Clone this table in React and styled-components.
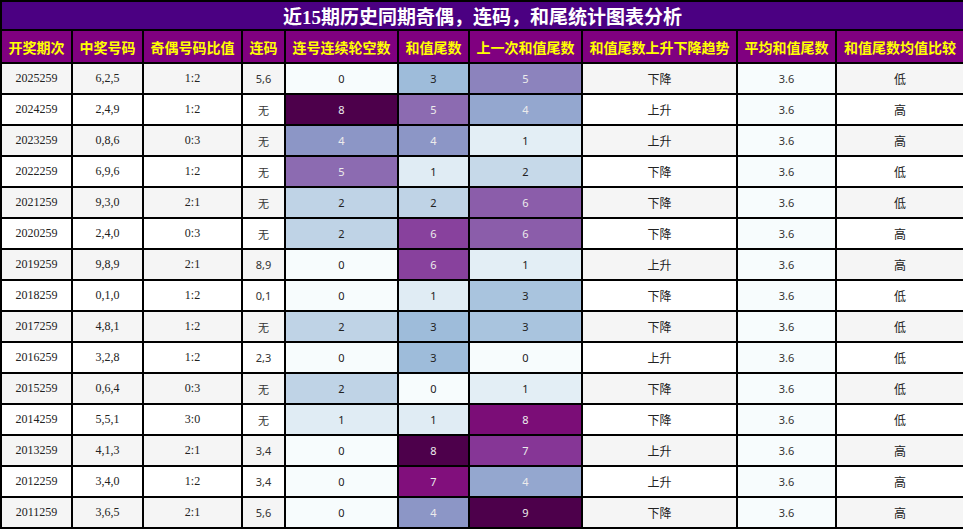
import React from "react"
import styled, { createGlobalStyle } from "styled-components"

const GlobalStyle = createGlobalStyle`
  html, body {
    margin: 0;
    padding: 0;
    background: #ffffff;
  }
`

const headers = [
  "开奖期次",
  "中奖号码",
  "奇偶号码比值",
  "连码",
  "连号连续轮空数",
  "和值尾数",
  "上一次和值尾数",
  "和值尾数上升下降趋势",
  "平均和值尾数",
  "和值尾数均值比较",
]

const widths = [71, 71, 99, 43, 113, 71, 113, 155, 99, 128]

const rows = [
  ["2025259", "6,2,5", "1:2", "5,6", 0, 3, 5, "下降", "低"],
  ["2024259", "2,4,9", "1:2", "无", 8, 5, 4, "上升", "高"],
  ["2023259", "0,8,6", "0:3", "无", 4, 4, 1, "上升", "高"],
  ["2022259", "6,9,6", "1:2", "无", 5, 1, 2, "下降", "低"],
  ["2021259", "9,3,0", "2:1", "无", 2, 2, 6, "下降", "低"],
  ["2020259", "2,4,0", "0:3", "无", 2, 6, 6, "下降", "高"],
  ["2019259", "9,8,9", "2:1", "8,9", 0, 6, 1, "上升", "高"],
  ["2018259", "0,1,0", "1:2", "0,1", 0, 1, 3, "下降", "低"],
  ["2017259", "4,8,1", "1:2", "无", 2, 3, 3, "下降", "低"],
  ["2016259", "3,2,8", "1:2", "2,3", 0, 3, 0, "上升", "低"],
  ["2015259", "0,6,4", "0:3", "无", 2, 0, 1, "下降", "低"],
  ["2014259", "5,5,1", "3:0", "无", 1, 1, 8, "下降", "低"],
  ["2013259", "4,1,3", "2:1", "3,4", 0, 8, 7, "上升", "高"],
  ["2012259", "3,4,0", "1:2", "3,4", 0, 7, 4, "上升", "高"],
  ["2011259", "3,6,5", "2:1", "5,6", 0, 4, 9, "下降", "高"],
]

// BuPu scale
const palette = [
  [247, 252, 253],
  [224, 236, 244],
  [191, 211, 230],
  [158, 188, 218],
  [140, 150, 198],
  [140, 107, 177],
  [136, 65, 157],
  [129, 15, 124],
  [77, 0, 75],
]

const scale = t => {
  const p = Math.max(0, Math.min(1, t)) * (palette.length - 1)
  const i = Math.min(Math.floor(p), palette.length - 2)
  const f = p - i
  const c = palette[i].map((v, k) => Math.round(v + (palette[i + 1][k] - v) * f))
  return `rgb(${c.join(",")})`
}

const heat = (col, value) => {
  const vals = rows.map(r => r[col])
  const min = Math.min(...vals)
  const max = Math.max(...vals)
  const t = max === min ? 0 : (value - min) / (max - min)
  return { bg: scale(t), light: t > 0.4 }
}

const App = () => (
  <>
    <GlobalStyle />
    <Table>
      <colgroup>
        {widths.map((w, i) => (
          <col key={i} style={{ width: w }} />
        ))}
      </colgroup>
      <thead>
        <tr>
          <Title colSpan={10}>近15期历史同期奇偶，连码，和尾统计图表分析</Title>
        </tr>
        <tr>
          {headers.map(h => (
            <HeadCell key={h}>{h}</HeadCell>
          ))}
        </tr>
      </thead>
      <tbody>
        {rows.map((r, i) => {
          const a = heat(4, r[4])
          const b = heat(5, r[5])
          const c = heat(6, r[6])
          return (
            <Row key={r[0]} $odd={i % 2 === 0}>
              <Cell>{r[0]}</Cell>
              <Cell>{r[1]}</Cell>
              <Cell>{r[2]}</Cell>
              <SansCell>{r[3]}</SansCell>
              <HeatCell $bg={a.bg} $light={a.light}>{r[4]}</HeatCell>
              <HeatCell $bg={b.bg} $light={b.light}>{r[5]}</HeatCell>
              <HeatCell $bg={c.bg} $light={c.light}>{r[6]}</HeatCell>
              <WordCell>{r[7]}</WordCell>
              <AvgCell>3.6</AvgCell>
              <WordCell>{r[8]}</WordCell>
            </Row>
          )
        })}
      </tbody>
    </Table>
  </>
)

const Table = styled.table`
  width: 963px;
  border-collapse: collapse;
  table-layout: fixed;
  font-family: "Liberation Serif", "Noto Sans CJK SC", serif;
  font-size: 12px;
  color: #222222;
`

const Title = styled.th`
  height: 27px;
  padding: 0;
  background: #4b0082;
  color: #ffffff;
  font-size: 19px;
  font-weight: bold;
  text-align: center;
  border: 2px solid #000000;
`

const HeadCell = styled.th`
  height: 31px;
  padding: 0;
  background: #800080;
  color: #ffff00;
  font-family: "Noto Sans CJK SC", sans-serif;
  font-size: 14px;
  font-weight: bold;
  text-align: center;
  white-space: nowrap;
  border: 2px solid #000000;
`

const Row = styled.tr`
  background: ${p => (p.$odd ? "#f5f5f5" : "#ffffff")};
`

const Cell = styled.td`
  height: 29px;
  padding: 0;
  text-align: center;
  border: 2px solid #000000;
`

const SansCell = styled(Cell)`
  font-family: "Noto Sans", "Noto Sans CJK SC", sans-serif;
  font-size: 11px;
  color: #333333;
`

const WordCell = styled(Cell)`
  font-family: "Noto Sans CJK SC", sans-serif;
  font-size: 12px;
`

const HeatCell = styled(SansCell)`
  background: ${p => p.$bg};
  color: ${p => (p.$light ? "#ececec" : "#222222")};
`

const AvgCell = styled(SansCell)`
  background: #f7fcfd;
`

export default App
